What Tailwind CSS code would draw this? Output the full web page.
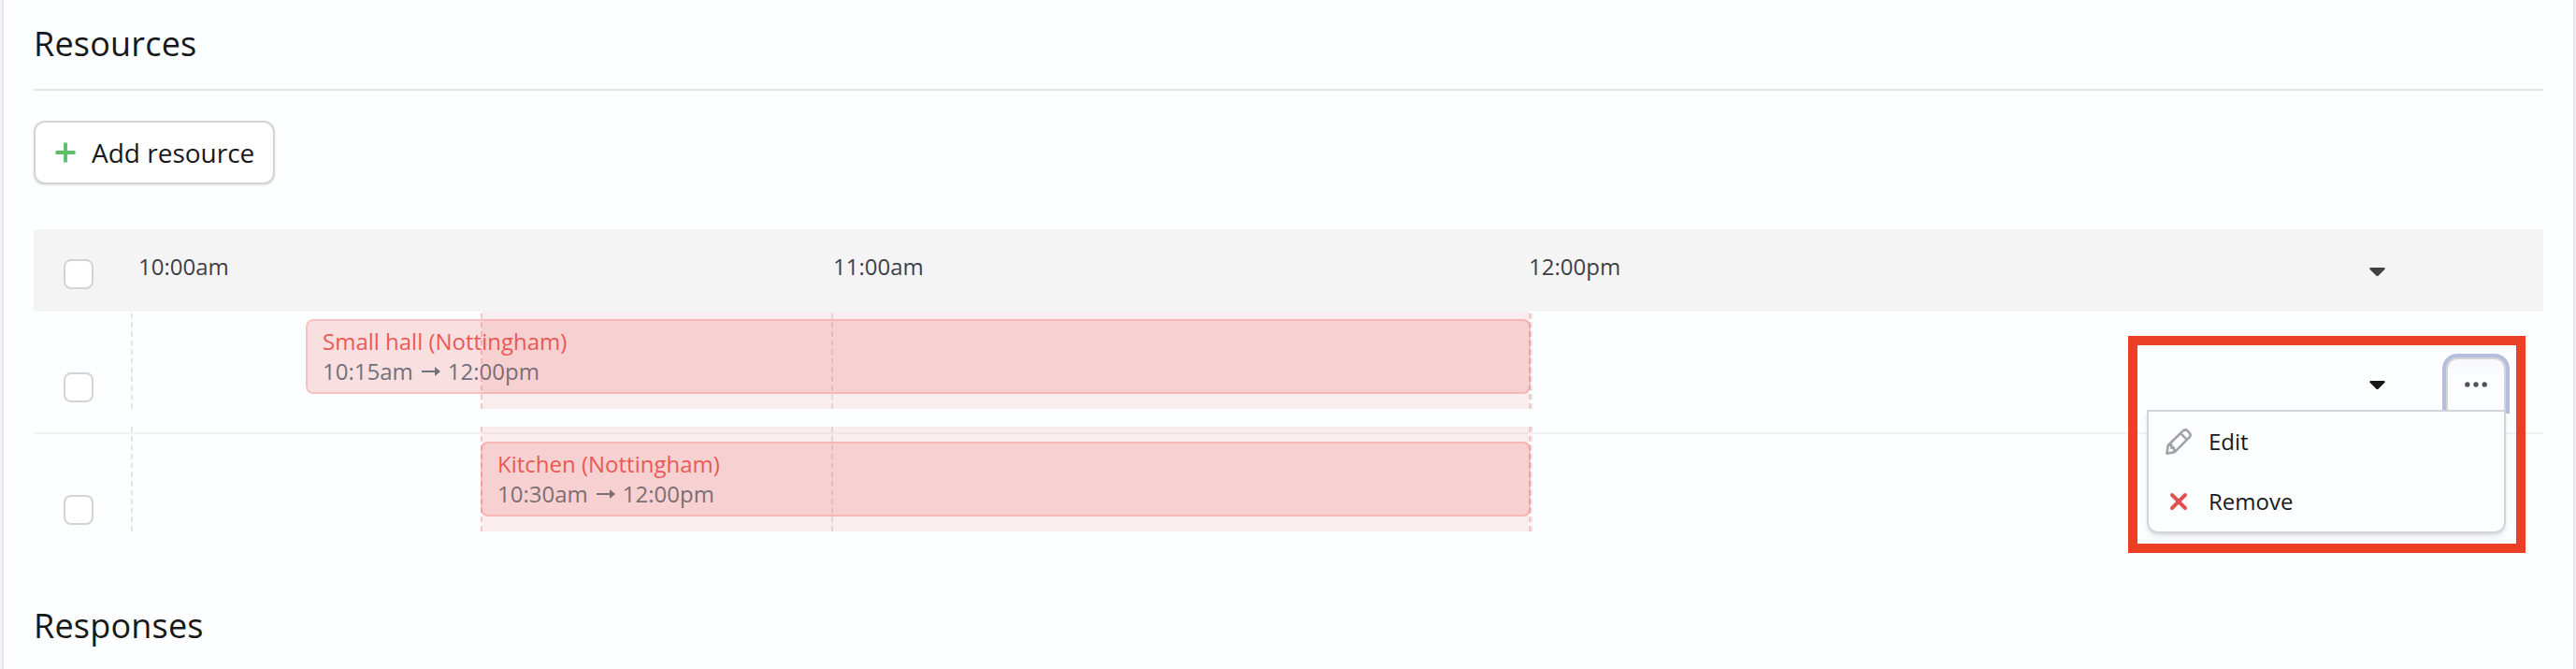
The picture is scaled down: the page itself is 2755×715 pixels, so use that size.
<!DOCTYPE html>
<html lang="en">
<head>
<meta charset="utf-8">
<title>Resources</title>
<script src="https://cdn.jsdelivr.net/npm/@tailwindcss/browser@4"></script>
</head>
<body class="bg-[#f4f4f6] px-[2px] pr-[1px] h-[715px] overflow-hidden font-['Open_Sans','Noto_Sans',sans-serif] text-[#18181b]">
<main class="h-[715px] border-x-2 border-[#e4e4e7] bg-[#fdfeff] px-8">
  <h2 class="h-[97px] border-b-2 border-[#e4e4e7] pt-[22px] text-[36px] leading-[50px] tracking-[0.2px]">Resources</h2>
  <button class="mt-8 flex h-[68px] w-[258px] items-center rounded-xl border-2 border-[#d4d4d8] bg-white pl-[21px] text-[28px] shadow-sm">
    <svg class="h-[22px] w-[22px]" viewBox="0 0 22 22" fill="none" stroke="#5bbf65" stroke-width="3.8" stroke-linecap="butt"><path d="M11 .5v21M.5 11h21"/></svg>
    <span class="ml-[17px] whitespace-nowrap">Add resource</span>
  </button>

  <section class="relative mt-12 h-[330px] text-[24px] leading-8">
    <div class="relative z-20 flex h-[88px] bg-[#f4f4f4] text-[#3f3f46]">
      <div class="w-[104px] pt-8 pl-8"><div class="h-8 w-8 rounded-lg border-2 border-[#d4d4d8] bg-white"></div></div>
      <div class="w-[749px] pt-6 pl-2">10:00am</div>
      <div class="w-[746px] pt-6 pl-[2px]">11:00am</div>
      <div class="flex-1 pt-6">12:00pm</div>
      <div class="w-[186px] pt-[41px]"><svg class="h-[10px] w-[17px]" viewBox="0 0 17 10" fill="currentColor"><path d="M1.2 0h14.6q1.6.9.5 2L9.5 8.8q-1 .9-2 0L.7 2Q-.4.9 1.2 0z"/></svg></div>
    </div>

    <div class="flex h-[131px] border-b-2 border-[#f3f3f5]">
      <div class="w-[104px] pt-[65px] pl-8"><div class="h-8 w-8 rounded-lg border-2 border-[#d4d4d8] bg-white"></div></div>
      <div class="relative -mt-2 h-[112px] w-[1499px]">
        <div class="absolute top-4 left-[187px] h-20 w-[1310px] rounded-lg border-2 border-[#f8c1c1] bg-[#fadfe0] px-4 pt-1.5">
          <div class="text-[#ea5a55]">Small hall (Nottingham)</div>
          <div class="text-[#71717a] flex items-center"><span>10:15am</span><svg class="mr-2 ml-[9px] h-4 w-5" viewBox="0 0 20 16"><path d="M0 8h16" stroke="currentColor" stroke-width="2" fill="none"/><path d="M14 3l6 5-6 5z" fill="currentColor"/></svg><span>12:00pm</span></div>
        </div>
        <div class="absolute inset-y-0 left-[374px] w-[1123px] border-x-2 border-dashed border-[#f05a5a]/35 bg-[#df5950]/10 bg-clip-padding"></div>
        <div class="absolute inset-y-0 left-0 border-l-2 border-dashed border-[#18181b]/11"></div>
        <div class="absolute inset-y-0 left-[749px] border-l-2 border-dashed border-[#18181b]/11"></div>
        <div class="absolute inset-y-0 left-[1497px] border-l-2 border-dashed border-[#18181b]/11"></div>
      </div>
    </div>

    <div class="flex h-[111px]">
      <div class="w-[104px] pt-[65px] pl-8"><div class="h-8 w-8 rounded-lg border-2 border-[#d4d4d8] bg-white"></div></div>
      <div class="relative -mt-2 h-[112px] w-[1499px]">
        <div class="absolute top-4 left-[374px] h-20 w-[1123px] rounded-lg border-2 border-[#f8c1c1] bg-[#fadfe0] px-4 pt-1.5">
          <div class="text-[#ea5a55]">Kitchen (Nottingham)</div>
          <div class="text-[#71717a] flex items-center"><span>10:30am</span><svg class="mr-2 ml-[9px] h-4 w-5" viewBox="0 0 20 16"><path d="M0 8h16" stroke="currentColor" stroke-width="2" fill="none"/><path d="M14 3l6 5-6 5z" fill="currentColor"/></svg><span>12:00pm</span></div>
        </div>
        <div class="absolute inset-y-0 left-[374px] w-[1123px] border-x-2 border-dashed border-[#f05a5a]/35 bg-[#df5950]/10 bg-clip-padding"></div>
        <div class="absolute inset-y-0 left-0 border-l-2 border-dashed border-[#18181b]/11"></div>
        <div class="absolute inset-y-0 left-[749px] border-l-2 border-dashed border-[#18181b]/11"></div>
        <div class="absolute inset-y-0 left-[1497px] border-l-2 border-dashed border-[#18181b]/11"></div>
      </div>
    </div>

    <!-- Highlighted row actions with the open menu -->
    <div class="absolute top-[114px] left-[2240px] z-30 h-[232px] w-[425px] border-[10px] border-[#ec4026]">
      <svg class="absolute top-[38px] left-[248px] h-[10px] w-[17px]" viewBox="0 0 17 10" fill="currentColor"><path d="M1.2 0h14.6q1.6.9.5 2L9.5 8.8q-1 .9-2 0L.7 2Q-.4.9 1.2 0z"/></svg>
      <div class="absolute top-[9px] left-[326px] h-[64px] w-[72px] rounded-t-2xl bg-[#b4bedd] px-1 pt-1">
        <div class="flex h-full justify-center rounded-t-xl border-2 border-b-0 border-[#d4d4d8] bg-gradient-to-b from-[#f8f8fa] to-[#fdfeff] to-40% pt-6">
          <svg class="h-[6px] w-6" viewBox="0 0 24 6" fill="#52525b"><circle cx="2.8" cy="3" r="2.7"/><circle cx="12" cy="3" r="2.7"/><circle cx="21.2" cy="3" r="2.7"/></svg>
        </div>
      </div>
      <div class="absolute top-[69px] left-[10px] h-[132px] w-[384px] rounded-b-xl border-2 border-[#d4d4d8] bg-[#fdfeff] pl-[18px] shadow-md">
        <div class="flex h-16 items-center">
          <svg class="h-7 w-7" viewBox="0 0 28 28" fill="none" stroke="#a1a1aa" stroke-width="2.6" stroke-linejoin="round"><path d="M1.4 26.6l1.3-8.6L18.8 2.4q2.4-2 4.6 0l2.3 2.4q1.8 2.2 0 4.4L9.6 25.3zM16.2 5.2l6.6 6.6M3.2 17.6h3.2v3.2l2.4-.4.8 4.4"/></svg>
          <span class="ml-[18px]">Edit</span>
        </div>
        <div class="flex h-16 items-center">
          <svg class="h-7 w-7" viewBox="0 0 28 28" stroke="#e05252" stroke-width="4" stroke-linecap="round"><path d="M7 7l14 14M21 7L7 21"/></svg>
          <span class="ml-[18px]">Remove</span>
        </div>
      </div>
    </div>
  </section>

  <h2 class="mt-[69px] text-[36px] leading-[50px] tracking-[0.2px]">Responses</h2>
</main>
</body>
</html>
